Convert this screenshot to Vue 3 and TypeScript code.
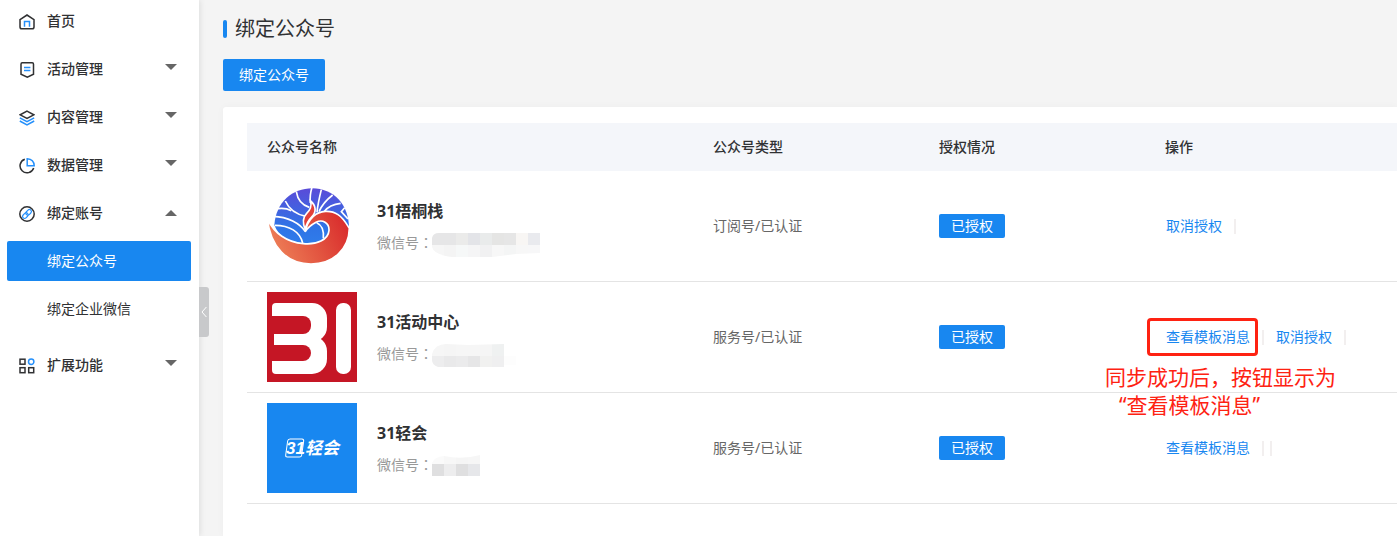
<script setup lang="ts">
import { ref } from 'vue'

type IconName = 'home' | 'activity' | 'content' | 'data' | 'account' | 'extend'

interface MenuItem {
  icon: IconName
  label: string
  children?: string[]
  expandable: boolean
}

interface Account {
  logo: 'wutong' | 'center' | 'qinghui'
  name: string
  kind: string
  mosaic: { width: number; clip: string; rows: string[][] }
  actions: string[]
}

const menu: MenuItem[] = [
  { icon: 'home', label: '首页', expandable: false },
  { icon: 'activity', label: '活动管理', expandable: true },
  { icon: 'content', label: '内容管理', expandable: true },
  { icon: 'data', label: '数据管理', expandable: true },
  { icon: 'account', label: '绑定账号', expandable: true, children: ['绑定公众号', '绑定企业微信'] },
  { icon: 'extend', label: '扩展功能', expandable: true },
]

const opened = ref<string>('绑定账号')
const current = ref<string>('绑定公众号')

const toggle = (item: MenuItem) => {
  if (item.expandable) opened.value = opened.value === item.label ? '' : item.label
}

const accounts: Account[] = [
  {
    logo: 'wutong',
    name: '31梧桐栈',
    kind: '订阅号/已认证',
    mosaic: {
      width: 108,
      clip: 'M0 5 Q1 0 7 0 H108 V20 L84 21 L60 24 H20 Q2 22 0 14 Z',
      rows: [
        ['#e6e6e7', '#e6e6e7', '#ebebea', '#e3e4e8', '#e9ebeb', '#e5e5e4', '#e6e6e6', '#f8f6f4', '#e9eaee'],
        ['#f6f6f6', '#f4f4f4', '#f6f8f8', '#f5f5f6', '#f1f1f2', '#f7f7f7', '#f4f5f5', '#f7f7f7', '#f7f7f8'],
      ],
    },
    actions: ['取消授权'],
  },
  {
    logo: 'center',
    name: '31活动中心',
    kind: '服务号/已认证',
    mosaic: {
      width: 84,
      clip: 'M0 10 Q3 0 14 0 L36 1 L72 0 V12 H84 V21 H72 V23 H6 Q0 21 0 16 Z',
      rows: [
        ['#f6f6f6', '#f5f5f5', '#f6f6f6', '#f6f6f6', '#f5f5f5', '#eff1f1', '#ffffff'],
        ['#ededee', '#e9e9ea', '#ebebec', '#e6e6e7', '#f1f1f0', '#efeff0', '#fdfdfd'],
      ],
    },
    actions: ['查看模板消息', '取消授权'],
  },
  {
    logo: 'qinghui',
    name: '31轻会',
    kind: '服务号/已认证',
    mosaic: {
      width: 48,
      clip: 'M0 8 Q2 2 12 1 Q30 5 48 0 V21 H0 Z',
      rows: [
        ['#fafafa', '#f7f7f7', '#f5f5f5', '#f6f6f6'],
        ['#dfdfe0', '#ededee', '#dfdfe0', '#e6e7ea'],
      ],
    },
    actions: ['查看模板消息'],
  },
]
</script>

<template>
  <div class="page">
    <aside class="sidebar">
      <nav class="menu">
        <div v-for="item in menu" :key="item.label" class="menu-group">
          <button class="menu-item" type="button" @click="toggle(item)">
            <svg class="menu-icon" viewBox="0 0 16 16" aria-hidden="true">
              <g v-if="item.icon === 'home'">
                <path class="ink" d="M1 5.6 L8 1 L15 5.6 V13 Q15 14.8 13.2 14.8 H2.8 Q1 14.8 1 13 Z" />
                <path class="accent" d="M5.5 12.8 V7.4 H10.5 V12.8" />
              </g>
              <g v-else-if="item.icon === 'activity'">
                <path class="ink" d="M3.2 .8 H13.2 Q14.5 .8 14.5 2.2 V12.2 L8.3 15.2 L2 12.2 V2.2 Q2 .8 3.2 .8 Z" />
                <path class="accent" d="M5 5.4 H11.4 M5 8.4 H11.4" />
              </g>
              <g v-else-if="item.icon === 'content'">
                <path class="ink" d="M8 1.2 L14.8 4.8 L8 8.4 L1.2 4.8 Z" />
                <path class="accent" d="M.8 7.9 L8 11.6 L15.2 7.9 M.8 11 L8 14.8 L15.2 11" />
              </g>
              <g v-else-if="item.icon === 'data'">
                <path class="ink" d="M5.8 1.2 A7 7 0 1 0 14.7 10" />
                <path class="accent" d="M8.2 .8 V7.8 H15.2 Q15 1.4 8.2 .8 Z" />
              </g>
              <g v-else-if="item.icon === 'account'">
                <circle class="ink" cx="8" cy="8" r="7.2" />
                <g class="chain" transform="rotate(-45 8 8)">
                  <rect x="2.6" y="6" width="6.2" height="4" rx="2" />
                  <rect x="7.2" y="6" width="6.2" height="4" rx="2" />
                </g>
              </g>
              <g v-else>
                <rect class="ink" x="1" y="1.2" width="5" height="5" />
                <circle class="accent" cx="12.2" cy="3.7" r="2.7" />
                <rect class="ink" x="1" y="9.7" width="5" height="5" />
                <rect class="ink" x="9.7" y="9.7" width="5" height="5" />
              </g>
            </svg>
            <span class="menu-label">{{ item.label }}</span>
            <svg
              v-if="item.expandable"
              class="caret"
              :class="{ 'caret-open': opened === item.label }"
              viewBox="0 0 12 6"
              aria-hidden="true"
            >
              <path :d="opened === item.label ? 'M0 6 H12 L6 0 Z' : 'M0 0 H12 L6 6 Z'" />
            </svg>
          </button>
          <div v-if="item.children && opened === item.label" class="submenu">
            <button
              v-for="child in item.children"
              :key="child"
              type="button"
              class="submenu-item"
              :class="{ active: current === child }"
              @click="current = child"
            >
              {{ child }}
            </button>
          </div>
        </div>
      </nav>
      <button class="collapse" type="button" aria-label="收起菜单">
        <svg viewBox="0 0 6 12" aria-hidden="true"><path d="M5.4 1 L1 6 L5.4 11" /></svg>
      </button>
    </aside>

    <main class="content">
      <h1 class="title">绑定公众号</h1>
      <button class="primary" type="button">绑定公众号</button>

      <section class="card">
        <table class="accounts">
          <colgroup>
            <col />
            <col class="col-mid" />
            <col class="col-mid" />
            <col class="col-actions" />
          </colgroup>
          <thead>
            <tr>
              <th scope="col">公众号名称</th>
              <th scope="col">公众号类型</th>
              <th scope="col">授权情况</th>
              <th scope="col">操作</th>
            </tr>
          </thead>
          <tbody>
            <tr v-for="account in accounts" :key="account.name">
              <td>
                <div class="profile">
                  <svg v-if="account.logo === 'wutong'" class="logo" viewBox="21 18 270 270" aria-hidden="true">
                    <defs>
                      <linearGradient id="dome" x1="0" y1="0" x2="0" y2="1">
                        <stop offset="0" stop-color="#5a4bd8" />
                        <stop offset="0.7" stop-color="#2f74e6" />
                        <stop offset="1" stop-color="#2f7cea" />
                      </linearGradient>
                      <linearGradient id="swoosh" x1="0" y1="0.6" x2="1" y2="0.3">
                        <stop offset="0" stop-color="#ee8158" />
                        <stop offset="0.55" stop-color="#e2533f" />
                        <stop offset="1" stop-color="#d92b2c" />
                      </linearGradient>
                    </defs>
                    <path fill="url(#dome)" d="M43 150 C48 82 97 40 157 40 C220 40 267 88 267 160 L210 205 H130 C90 202 55 185 43 150 Z" />
                    <g class="veins">
                      <path d="M40 124 C83 125 120 145 136 170" />
                      <path d="M45 151 C88 151 120 170 128 204" />
                      <path d="M76 78 C88 105 112 119 138 124" />
                      <path d="M52 101 C70 98 83 101 94 107" />
                      <path d="M109 50 C113 75 127 91 148 97" />
                      <path d="M156 37 C150 57 149 67 151 84" />
                      <path d="M184 44 C178 68 173 90 171 112" />
                      <path d="M218 60 C200 74 184 94 177 110" />
                      <path d="M242 85 C222 87 202 97 192 110" />
                      <path d="M254 98 L244 110 L264 132" />
                      <path d="M170 143 C186 150 192 168 190 190" />
                    </g>
                    <path
                      class="swoosh"
                      d="M22 130 C42 176 82 202 130 206 C170 210 205 194 207 166 C208 143 187 132 168 142 C155 149 144 157 136 170 C139 152 146 137 160 124 C180 106 212 104 234 119 C252 131 260 148 268 160 C267 222 220 267 153 267 C82 267 31 217 22 130 Z"
                    />
                    <path class="flame" d="M152 78 C169 92 169 112 156 125 C144 137 138 148 136 164 C127 143 129 126 140 115 C151 105 156 96 152 78 Z" />
                  </svg>
                  <svg v-else-if="account.logo === 'center'" class="logo" viewBox="0 0 90 90" aria-hidden="true">
                    <rect width="90" height="90" fill="#c51625" />
                    <g fill="#fff">
                      <rect x="20" y="11" width="40" height="39" rx="15" />
                      <rect x="20" y="44" width="40" height="38" rx="15" />
                      <rect x="5" y="11" width="40" height="71" rx="4" />
                      <rect x="36" y="36" width="15" height="21" />
                      <rect x="69" y="11" width="15" height="71" rx="7" />
                    </g>
                    <g fill="#c51625">
                      <rect x="-10" y="24" width="54" height="18" rx="8" />
                      <rect x="-10" y="53" width="54" height="16" rx="8" />
                      <rect x="0" y="35" width="7" height="25" />
                    </g>
                  </svg>
                  <svg v-else class="logo" viewBox="0 0 90 90" role="img" aria-label="31轻会">
                    <rect width="90" height="90" fill="#1887f0" />
                    <g transform="skewX(-8)">
                      <rect x="26" y="36" width="16" height="18" rx="2" fill="none" stroke="#fff" stroke-width="1" />
                    </g>
                    <text class="logo-digits" x="19" y="51">31</text>
                    <text class="logo-text" x="38" y="51">轻会</text>
                  </svg>
                  <div class="profile-text">
                    <div class="profile-name">{{ account.name }}</div>
                    <div class="profile-id">
                      <span>微信号<span class="colon">：</span></span>
                      <svg
                        class="mosaic"
                        :viewBox="`0 0 ${account.mosaic.width} 24`"
                        :width="account.mosaic.width"
                        height="24"
                        aria-hidden="true"
                      >
                        <defs>
                          <clipPath :id="`clip-${account.logo}`"><path :d="account.mosaic.clip" /></clipPath>
                        </defs>
                        <g :clip-path="`url(#clip-${account.logo})`">
                          <template v-for="(row, r) in account.mosaic.rows" :key="r">
                            <rect
                              v-for="(fill, c) in row"
                              :key="c"
                              :x="c * 12"
                              :y="account.logo === 'qinghui' ? r * 9 : r * 12"
                              width="12"
                              height="12"
                              :fill="fill"
                            />
                          </template>
                        </g>
                      </svg>
                    </div>
                  </div>
                </div>
              </td>
              <td>{{ account.kind }}</td>
              <td><span class="badge">已授权</span></td>
              <td>
                <div class="actions">
                  <template v-for="action in account.actions" :key="action">
                    <a href="#" @click.prevent>{{ action }}</a>
                    <i class="sep"></i>
                  </template>
                  <i v-if="account.logo === 'qinghui'" class="sep sep-tail"></i>
                  <template v-if="account.logo === 'center'">
                    <div class="mark"></div>
                    <p class="note">
                      同步成功后，按钮显示为<br /><span class="note-quote">“查看模板消息”</span>
                    </p>
                  </template>
                </div>
              </td>
            </tr>
          </tbody>
        </table>
      </section>
    </main>
  </div>
</template>

<style>
body {
  margin: 0;
  background: #f4f4f4;
}
</style>

<style scoped>
.page {
  display: flex;
  min-height: 100vh;
  color: #303133;
  font: 14px/20px 'Noto Sans', 'Noto Sans CJK SC', sans-serif;
}
button {
  border: 0;
  padding: 0;
  font: inherit;
  color: inherit;
  background: none;
  cursor: pointer;
}
.sidebar {
  position: relative;
  flex: 0 0 199px;
  background: #fff;
  box-shadow: 1px 0 6px rgba(0, 21, 21, 0.1);
}
.menu {
  display: flex;
  flex-direction: column;
  gap: 6px;
}
.menu-item {
  display: flex;
  align-items: center;
  width: 100%;
  height: 42px;
  padding: 0 22px 0 19px;
  font-weight: 500;
  text-align: left;
}
.menu-icon {
  width: 16px;
  height: 16px;
  margin: 2px 12px 0 0;
}
.menu-icon .ink,
.menu-icon .accent,
.chain {
  fill: none;
  stroke: #303133;
  stroke-width: 1.5;
}
.menu-icon .accent,
.chain {
  stroke: #2590fb;
}
.chain {
  stroke-width: 1.2;
}
.menu-label {
  flex: 1;
}
.caret {
  width: 12px;
  height: 6px;
  margin-bottom: 4px;
  fill: #666;
}
.caret-open {
  margin-bottom: 0;
}
.submenu {
  display: flex;
  flex-direction: column;
  gap: 8px;
  padding: 7px 8px 9px 7px;
}
.submenu-item {
  height: 40px;
  padding-left: 40px;
  border-radius: 2px;
  text-align: left;
}
.submenu-item.active {
  color: #fff;
  background: #1887f0;
}
.collapse {
  position: absolute;
  top: 287px;
  left: 100%;
  display: flex;
  align-items: center;
  justify-content: center;
  width: 10px;
  height: 50px;
  border-radius: 0 3px 3px 0;
  background: #c8c9cb;
}
.collapse svg {
  width: 6px;
  height: 12px;
  fill: none;
  stroke: #fff;
}
.content {
  flex: 1;
  display: flex;
  flex-direction: column;
  align-items: flex-start;
  min-width: 0;
  padding: 14px 0 0 24px;
}
.title {
  display: flex;
  align-items: center;
  gap: 8px;
  margin: 0 0 16px;
  font-size: 20px;
  line-height: 29px;
  font-weight: 400;
}
.title::before {
  content: '';
  width: 4px;
  height: 18px;
  border-radius: 2px;
  background: #1887f0;
}
.primary {
  height: 32px;
  padding: 0 16px;
  border-radius: 2px;
  color: #fff;
  background: #1887f0;
}
.card {
  flex: 1;
  align-self: stretch;
  margin-top: 16px;
  padding: 16px 0 0 24px;
  border-radius: 3px 0 0 0;
  background: #fff;
  box-shadow: 0 0 8px rgba(0, 0, 0, 0.03);
}
.accounts {
  width: 100%;
  table-layout: fixed;
  border-collapse: separate;
  border-spacing: 0;
}
.col-mid {
  width: 226px;
}
.col-actions {
  width: 252px;
}
th {
  height: 48px;
  padding: 0 20px;
  text-align: left;
  font-weight: 500;
  background: #f4f6fa;
}
td {
  padding: 10px 20px;
  border-bottom: 1px solid #e4e4e4;
  color: #666;
}
.profile {
  display: flex;
  align-items: center;
  gap: 20px;
}
.logo {
  width: 90px;
  height: 90px;
}
.veins {
  fill: none;
  stroke: #fff;
  stroke-width: 5;
}
.swoosh {
  fill: url(#swoosh);
  stroke: #fff;
  stroke-width: 5;
}
.flame {
  fill: #e2403a;
  stroke: #fff;
  stroke-width: 5;
}
.logo-digits {
  font: italic 700 17px 'Liberation Sans', sans-serif;
  fill: #fff;
}
.logo-text {
  font: italic 700 17px 'Noto Sans CJK SC', sans-serif;
  fill: #fff;
}
.profile-name {
  color: #303133;
  font-size: 16px;
  line-height: 32px;
  font-weight: 700;
}
.profile-id {
  display: flex;
  align-items: center;
  height: 30px;
  color: #999;
}
.mosaic {
  margin: 6px 0 0 -1px;
}
.colon {
  font-family: 'Noto Sans CJK TC', sans-serif;
}
.badge {
  display: inline-block;
  padding: 0 12px;
  border-radius: 2px;
  color: #fff;
  line-height: 24px;
  background: #1887f0;
}
.actions {
  position: relative;
  display: flex;
  align-items: center;
  gap: 12px;
  padding-left: 1px;
  white-space: nowrap;
}
a {
  color: #1887f0;
  text-decoration: none;
}
.sep {
  width: 2px;
  height: 15px;
  background: #f2efef;
}
.sep-tail {
  margin-left: -6px;
}
.mark {
  position: absolute;
  top: -9px;
  left: -18px;
  box-sizing: border-box;
  width: 111px;
  height: 38px;
  border: 3px solid #fe2212;
  border-radius: 4px;
}
.note {
  position: absolute;
  top: 36px;
  left: -60px;
  margin: 0;
  color: #fe2212;
  font-size: 21px;
  line-height: 28px;
}
.note-quote {
  padding-left: 14px;
}
</style>
